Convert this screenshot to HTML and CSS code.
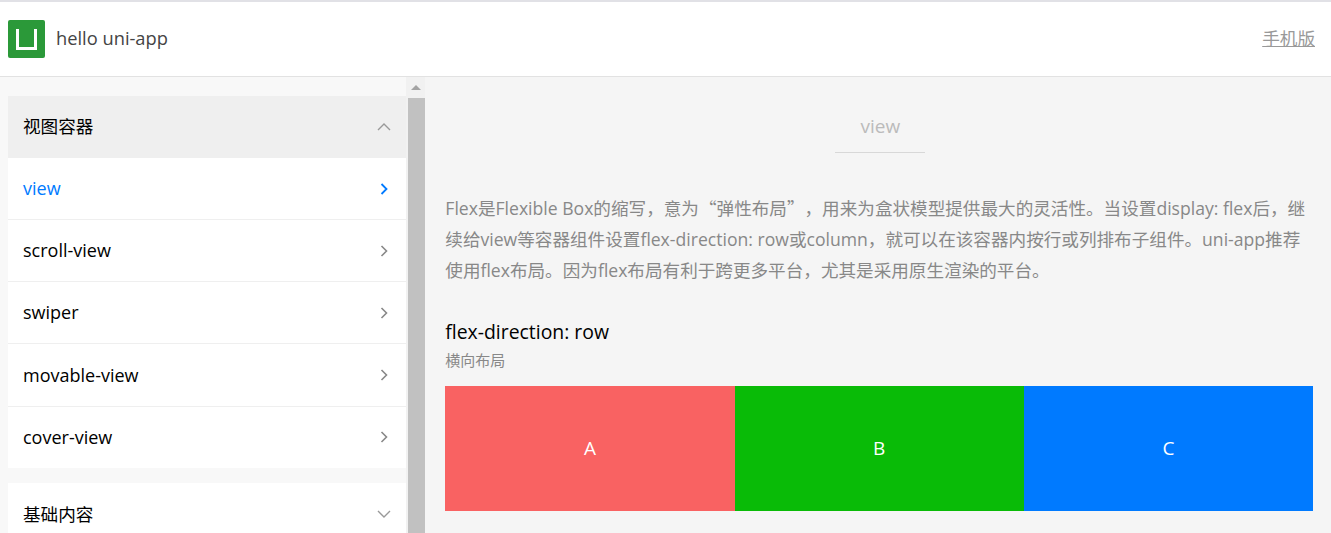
FILE: index.html
```html
<!DOCTYPE html>
<html lang="zh-CN">
<head>
    <meta charset="UTF-8">
    <title>hello uni-app</title>
    <link rel="stylesheet" href="styles.css">
</head>
<body>
    <header class="topbar">
        <svg class="logo" viewBox="0 0 37 38">
            <rect width="37" height="38" rx="2" fill="#2b9939"/>
            <path d="M9.5 9V28.5H27.5V9" fill="none" stroke="#fff" stroke-width="3"/>
        </svg>
        <span class="app-title">hello uni-app</span>
        <a class="mobile-link">手机版</a>
    </header>
    <div class="main">
        <aside class="sidebar">
            <div class="nav">
                <div class="nav-group">
                    <div class="nav-head open">
                        <span>视图容器</span>
                        <svg class="chevron" viewBox="0 0 14 8"><path d="M1 7L7 1L13 7"/></svg>
                    </div>
                    <div class="nav-item active">
                        <span>view</span>
                        <svg class="arrow" viewBox="0 0 8 14"><path d="M1.5 2L6.5 7L1.5 12"/></svg>
                    </div>
                    <div class="nav-item">
                        <span>scroll-view</span>
                        <svg class="arrow" viewBox="0 0 8 14"><path d="M1.5 2L6.5 7L1.5 12"/></svg>
                    </div>
                    <div class="nav-item">
                        <span>swiper</span>
                        <svg class="arrow" viewBox="0 0 8 14"><path d="M1.5 2L6.5 7L1.5 12"/></svg>
                    </div>
                    <div class="nav-item">
                        <span>movable-view</span>
                        <svg class="arrow" viewBox="0 0 8 14"><path d="M1.5 2L6.5 7L1.5 12"/></svg>
                    </div>
                    <div class="nav-item">
                        <span>cover-view</span>
                        <svg class="arrow" viewBox="0 0 8 14"><path d="M1.5 2L6.5 7L1.5 12"/></svg>
                    </div>
                </div>
                <div class="nav-group">
                    <div class="nav-head">
                        <span>基础内容</span>
                        <svg class="chevron" viewBox="0 0 14 8"><path d="M1 1L7 7L13 1"/></svg>
                    </div>
                </div>
            </div>
            <div class="scrollbar">
                <div class="scroll-up"></div>
                <div class="scroll-thumb"></div>
            </div>
        </aside>
        <main class="content">
            <div class="page-title">view</div>
            <p class="intro">Flex是Flexible Box的缩写，意为<span class="cjk">“弹性布局”，</span>用来为盒状模型提供最大的灵活性。当设置display: flex后，继续给view等容器组件设置flex-direction: row或column，就可以在该容器内按行或列排布子组件。uni-app推荐使用flex布局。因为flex布局有利于跨更多平台，尤其是采用原生渲染的平台。</p>
            <div class="demo-title">flex-direction: row</div>
            <div class="demo-sub">横向布局</div>
            <div class="flex-row">
                <div class="cell red">A</div>
                <div class="cell green">B</div>
                <div class="cell blue">C</div>
            </div>
        </main>
    </div>
</body>
</html>
```

FILE: styles.css
```css
* {
    box-sizing: border-box;
}
html, body {
    height: 100%;
}
body {
    margin: 0;
    display: flex;
    flex-direction: column;
    overflow: hidden;
    font-family: "Open Sans", "Noto Sans CJK SC", sans-serif;
    background-color: #f5f5f5;
}
.topbar {
    display: flex;
    align-items: center;
    flex-shrink: 0;
    height: 77px;
    padding: 0 16px 0 8px;
    background-color: white;
    border-top: 2px solid #e1e1e6;
    border-bottom: 1px solid #e2e2e2;
}
.logo {
    width: 37px;
    height: 38px;
}
.app-title {
    margin-left: 11px;
    margin-bottom: 4px;
    font-size: 18.3px;
    color: #444;
}
.mobile-link {
    margin-left: auto;
    margin-bottom: 4px;
    font-size: 17.6px;
    color: #999;
    text-decoration: underline;
}
.main {
    display: flex;
    flex: 1;
    min-height: 0;
}
.sidebar {
    display: flex;
    flex-shrink: 0;
    width: 425.3px;
    overflow: hidden;
    background-color: #f8f8f8;
}
.nav {
    width: 398px;
    margin-left: 8px;
    padding-top: 18.8px;
}
.nav-group {
    margin-bottom: 15px;
    background-color: white;
}
.nav-head, .nav-item {
    display: flex;
    align-items: center;
    justify-content: space-between;
    height: 62.18px;
    padding: 0 15px;
    font-size: 18px;
    color: #000;
}
.nav-head {
    font-size: 17.6px;
}
.nav-head span {
    margin-bottom: 2px;
}
.nav-item span {
    margin-bottom: 1px;
}
.nav-head.open {
    background-color: #efefef;
}
.nav-item {
    border-bottom: 1px solid #efefef;
}
.nav-item:last-child {
    height: 61.6px;
    border-bottom: none;
}
.nav-item.active {
    color: #007aff;
}
.chevron {
    width: 14px;
    height: 8px;
    fill: none;
    stroke: #999;
    stroke-width: 1.4;
}
.arrow {
    width: 8px;
    height: 14px;
    margin-right: 3px;
    fill: none;
    stroke: #888;
    stroke-width: 1.6;
}
.active .arrow {
    stroke: #007aff;
    stroke-width: 1.8;
}
.scrollbar {
    width: 19px;
    background-color: #f1f1f1;
}
.scroll-up {
    height: 21px;
    position: relative;
}
.scroll-up:after {
    content: '';
    position: absolute;
    left: 5px;
    top: 8px;
    border: 5px solid transparent;
    border-top: none;
    border-bottom-color: #a3a3a3;
}
.scroll-thumb {
    height: 100%;
    margin-left: 2px;
    background-color: #c1c1c1;
}
.content {
    flex: 1;
    min-width: 0;
    padding: 0 18px 0 20px;
    overflow: hidden;
}
.page-title {
    width: 90px;
    margin: 36px 0 0 390px;
    padding-bottom: 13px;
    text-align: center;
    font-size: 19px;
    color: #bbb;
    border-bottom: 1px solid #d8d8d8;
}
.intro {
    margin: 39px 0 0;
    font-size: 17.6px;
    line-height: 31px;
    color: #888;
    text-spacing-trim: space-all;
}
.cjk {
    font-family: "Noto Sans CJK SC", sans-serif;
}
.demo-title {
    margin-top: 32px;
    font-size: 19.4px;
    color: #000;
}
.demo-sub {
    margin-top: 4px;
    font-size: 15px;
    color: #888;
}
.flex-row {
    display: flex;
    margin-top: 16px;
}
.cell {
    flex: 1;
    height: 125px;
    line-height: 125px;
    text-align: center;
    font-size: 19px;
    color: white;
}
.red {
    background-color: #f96262;
}
.green {
    background-color: #09bb07;
}
.blue {
    background-color: #007aff;
}
```
